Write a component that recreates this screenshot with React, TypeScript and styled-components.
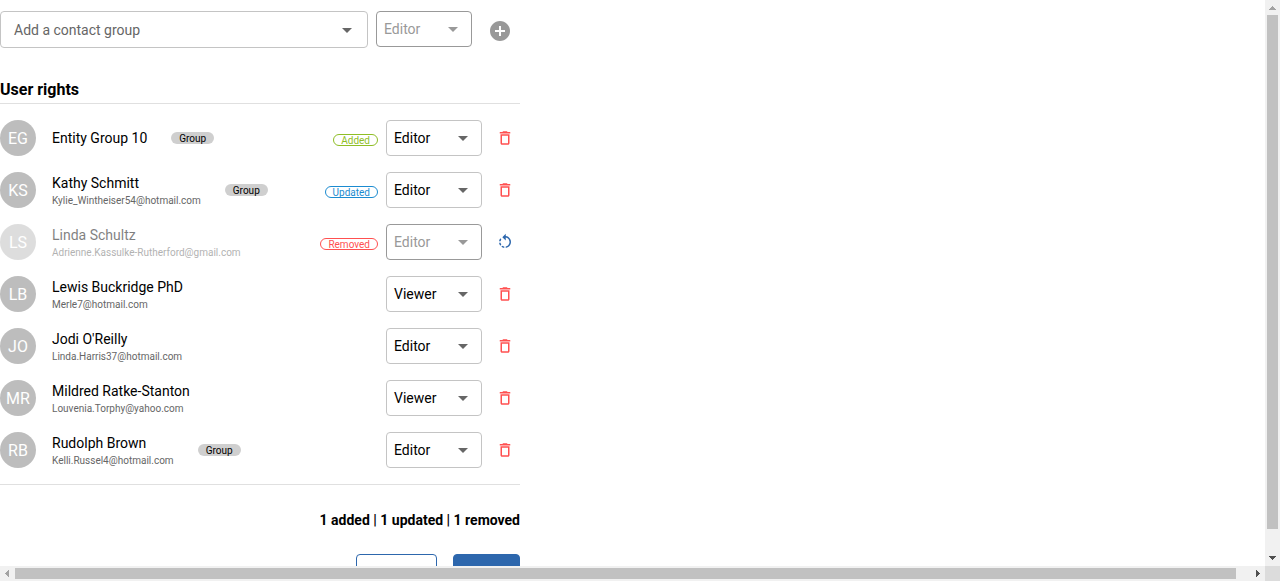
import React from 'react';
import styled, { createGlobalStyle, css } from 'styled-components';
import { MdAddCircle, MdArrowDropDown, MdDeleteOutline, MdRotateLeft } from 'react-icons/md';

const GlobalStyle = createGlobalStyle`
  *, *::before, *::after { box-sizing: border-box; }
  body {
    margin: 0;
    overflow: hidden;
    background: #fff;
    color: #000;
    font-family: Roboto, "Liberation Sans", sans-serif;
    font-size: 14px;
  }
`;

const Viewport = styled.div`
  display: grid;
  grid-template-columns: minmax(0, 1fr) 15px;
  grid-template-rows: minmax(0, 1fr) 15px;
  width: 100vw;
  height: 100vh;
`;

const Content = styled.main`
  overflow: hidden;
`;

const Panel = styled.section`
  width: 520px;
  padding-top: 11px;
`;

const AddBar = styled.div`
  display: flex;
  align-items: flex-start;
  gap: 8px;
  height: 37px;
`;

const GroupField = styled.div`
  display: flex;
  align-items: center;
  justify-content: space-between;
  width: 368px;
  height: 37px;
  padding: 0 8px 0 13px;
  border: 1px solid #c4c4c4;
  border-radius: 4px;
  color: #666;
`;

const Arrow = styled(MdArrowDropDown)`
  flex: none;
  width: 24px;
  height: 24px;
  color: #666;
`;

const SelectBox = styled.div<{ $disabled?: boolean }>`
  display: flex;
  flex: none;
  align-items: center;
  justify-content: space-between;
  width: 96px;
  height: 36px;
  padding: 0 6px 0 7px;
  border: 1px solid ${(p) => (p.$disabled ? '#999' : '#c4c4c4')};
  border-radius: 4px;
  color: ${(p) => (p.$disabled ? '#999' : '#000')};
  ${(p) =>
    p.$disabled &&
    css`
      ${Arrow} {
        color: #999;
      }
    `}
`;

const IconButton = styled.button<{ $size: number; $color: string }>`
  display: flex;
  flex: none;
  align-items: center;
  justify-content: center;
  width: ${(p) => p.$size}px;
  height: ${(p) => p.$size}px;
  padding: 0;
  border: 0;
  background: none;
  color: ${(p) => p.$color};
`;

const AddButton = styled(IconButton)`
  margin: 8px 0 0 8px;
`;

const Heading = styled.h2`
  height: 29px;
  margin: 27px 0 0;
  padding-top: 6px;
  border-bottom: 1px solid #e0e0e0;
  font-size: 16px;
  font-weight: 700;
  line-height: 18px;
`;

const UserList = styled.ul`
  margin: 0;
  padding: 8px 0;
  border-bottom: 1px solid #e0e0e0;
  list-style: none;
`;

const Row = styled.li`
  display: flex;
  align-items: center;
  height: 52px;
`;

const Identity = styled.div<{ $faded: boolean }>`
  display: flex;
  flex: 1;
  align-items: center;
  opacity: ${(p) => (p.$faded ? 0.5 : 1)};
`;

const Avatar = styled.span`
  display: flex;
  align-items: center;
  justify-content: center;
  width: 36px;
  height: 36px;
  margin-right: 16px;
  border-radius: 50%;
  background: #bdbdbd;
  color: #fff;
  font-size: 16px;
`;

const Names = styled.div`
  display: flex;
  flex-direction: column;
`;

const Name = styled.span`
  line-height: 20px;
`;

const Email = styled.span`
  height: 14px;
  color: #666;
  font-size: 10px;
  line-height: 16px;
`;

const GroupTag = styled.span`
  height: 12px;
  margin-left: 24px;
  padding: 0 8px;
  overflow: hidden;
  border-radius: 6px;
  background: #cfcfcf;
  font-size: 10px;
  line-height: 14px;
`;

const StatusTag = styled.span<{ $color: string }>`
  height: 12px;
  margin: 4px 8px 0 0;
  padding: 0 7px;
  border: 1px solid ${(p) => p.$color};
  border-radius: 6px;
  color: ${(p) => p.$color};
  font-size: 10px;
  line-height: 11px;
`;

const RowAction = styled(IconButton)`
  margin: 0 6px 0 14px;
`;

const Summary = styled.p`
  margin: 27px 0 0;
  font-weight: 700;
  line-height: 16px;
  text-align: right;
`;

const Actions = styled.div`
  display: flex;
  justify-content: flex-end;
  gap: 16px;
  margin-top: 26px;
`;

const ActionButton = styled.button<{ $filled?: boolean }>`
  width: ${(p) => (p.$filled ? 67 : 81)}px;
  height: 36px;
  border: 1px solid #2d67ad;
  border-radius: 4px;
  background: ${(p) => (p.$filled ? '#2d67ad' : '#fff')};
`;

const VerticalBar = styled.div`
  display: flex;
  flex-direction: column;
  align-items: center;
  justify-content: space-between;
  background: #f1f1f1;
`;

const HorizontalBar = styled.div`
  display: flex;
  align-items: center;
  justify-content: space-between;
  background: #f1f1f1;
`;

const VerticalThumb = styled.div`
  width: 11px;
  height: 514px;
  margin-bottom: auto;
  background: #c1c1c1;
`;

const HorizontalThumb = styled.div`
  width: 1221px;
  height: 11px;
  margin-right: auto;
  background: #c1c1c1;
`;

const ScrollArrow = styled.svg`
  display: block;
  flex: none;
  width: 15px;
  height: 15px;
`;

const Corner = styled.div`
  background: #dcdcdc;
`;

type Status = 'Added' | 'Updated' | 'Removed';

const statusColors: Record<Status, string> = {
  Added: '#8fbe26',
  Updated: '#1b8bd0',
  Removed: '#ff5050',
};

interface User {
  initials: string;
  name: string;
  email?: string;
  group?: boolean;
  status?: Status;
  role: string;
}

const users: User[] = [
  { initials: 'EG', name: 'Entity Group 10', group: true, status: 'Added', role: 'Editor' },
  { initials: 'KS', name: 'Kathy Schmitt', email: 'Kylie_Wintheiser54@hotmail.com', group: true, status: 'Updated', role: 'Editor' },
  { initials: 'LS', name: 'Linda Schultz', email: 'Adrienne.Kassulke-Rutherford@gmail.com', status: 'Removed', role: 'Editor' },
  { initials: 'LB', name: 'Lewis Buckridge PhD', email: 'Merle7@hotmail.com', role: 'Viewer' },
  { initials: 'JO', name: "Jodi O'Reilly", email: 'Linda.Harris37@hotmail.com', role: 'Editor' },
  { initials: 'MR', name: 'Mildred Ratke-Stanton', email: 'Louvenia.Torphy@yahoo.com', role: 'Viewer' },
  { initials: 'RB', name: 'Rudolph Brown', email: 'Kelli.Russel4@hotmail.com', group: true, role: 'Editor' },
];

function RoleSelect({ role, disabled }: { role: string; disabled?: boolean }) {
  return (
    <SelectBox $disabled={disabled}>
      {role}
      <Arrow />
    </SelectBox>
  );
}

function UserRow({ user }: { user: User }) {
  const removed = user.status === 'Removed';
  return (
    <Row>
      <Identity $faded={removed}>
        <Avatar>{user.initials}</Avatar>
        <Names>
          <Name>{user.name}</Name>
          {user.email && <Email>{user.email}</Email>}
        </Names>
        {user.group && <GroupTag>Group</GroupTag>}
      </Identity>
      {user.status && <StatusTag $color={statusColors[user.status]}>{user.status}</StatusTag>}
      <RoleSelect role={user.role} disabled={removed} />
      <RowAction $size={18} $color={removed ? '#2d67ad' : '#ff5050'}>
        {removed ? <MdRotateLeft size={18} /> : <MdDeleteOutline size={18} />}
      </RowAction>
    </Row>
  );
}

export default function App() {
  return (
    <>
      <GlobalStyle />
      <Viewport>
        <Content>
          <Panel>
            <AddBar>
              <GroupField>
                Add a contact group
                <Arrow />
              </GroupField>
              <RoleSelect role="Editor" disabled />
              <AddButton $size={24} $color="#999">
                <MdAddCircle size={24} />
              </AddButton>
            </AddBar>
            <Heading>User rights</Heading>
            <UserList>
              {users.map((user) => (
                <UserRow key={user.initials} user={user} />
              ))}
            </UserList>
            <Summary>1 added | 1 updated | 1 removed</Summary>
            <Actions>
              <ActionButton />
              <ActionButton $filled />
            </Actions>
          </Panel>
        </Content>
        <VerticalBar>
          <ScrollArrow viewBox="0 0 15 15" shapeRendering="crispEdges">
            <path d="M7 6h1v1h1v1h1v1h1v1H4V9h1V8h1V7h1z" fill="#a3a3a3" />
          </ScrollArrow>
          <VerticalThumb />
          <ScrollArrow viewBox="0 0 15 15" shapeRendering="crispEdges">
            <path d="M4 5h7v1h-1v1H9v1H8v1H7V8H6V7H5V6H4z" fill="#505050" />
          </ScrollArrow>
        </VerticalBar>
        <HorizontalBar>
          <ScrollArrow viewBox="0 0 15 15" shapeRendering="crispEdges">
            <path d="M9 4v7H8v-1H7V9H6V8H5V7h1V6h1V5h1V4z" fill="#a3a3a3" />
          </ScrollArrow>
          <HorizontalThumb />
          <ScrollArrow viewBox="0 0 15 15" shapeRendering="crispEdges">
            <path d="M6 4v7h1v-1h1V9h1V8h1V7H9V6H8V5H7V4z" fill="#505050" />
          </ScrollArrow>
        </HorizontalBar>
        <Corner />
      </Viewport>
    </>
  );
}
